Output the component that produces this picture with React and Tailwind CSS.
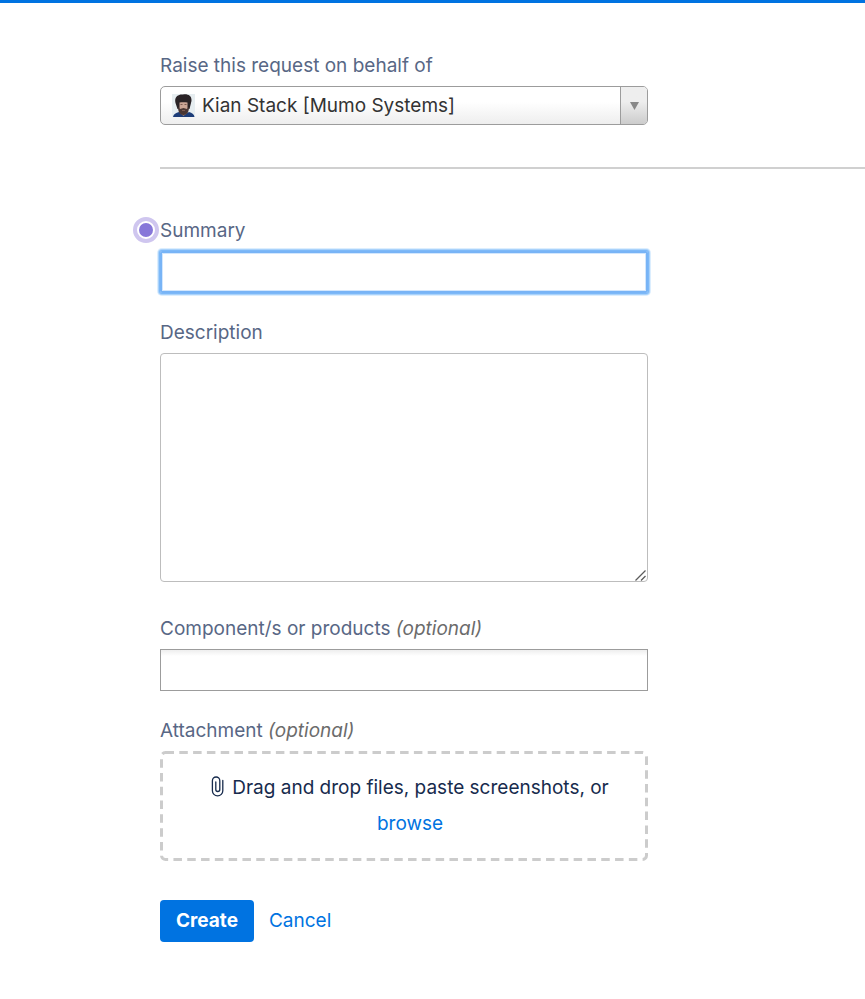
import { useState } from 'react';

export default function App() {
  const [summary, setSummary] = useState('');
  const [description, setDescription] = useState('');
  const [components, setComponents] = useState('');

  return (
    <div className="min-h-screen overflow-hidden border-t-3 border-[#0073e1] bg-white pb-14 pl-40 font-['Inter','Liberation_Sans',sans-serif] text-[19px] leading-6">
      <form onSubmit={(e) => e.preventDefault()}>
        <div className="border-b-2 border-[#d0d0d0] pt-[51px] pb-[42px]">
          <Field id="behalf" label="Raise this request on behalf of">
            <UserSelect id="behalf" />
          </Field>
        </div>

        <div className="flex flex-col gap-7 pt-[50px]">
          <Field id="summary" label="Summary" marker>
            <input
              id="summary"
              type="text"
              value={summary}
              onChange={(e) => setSummary(e.target.value)}
              className="block h-[42px] w-full rounded-xs border-2 border-[#78b4f6] px-2 shadow-[0_0_0_1px_#7db9f8,0_0_0_2px_#a9d2fb,0_0_0_3px_#dceefe,inset_0_0_0_1px_#d3e7fd] outline-none"
            />
          </Field>

          <Field id="description" label="Description">
            <div className="relative pb-[7px]">
              <textarea
                id="description"
                value={description}
                onChange={(e) => setDescription(e.target.value)}
                className="block h-[229px] w-full resize-none rounded-sm border border-[#bdbdbd] p-2 outline-none"
              />
              <svg
                className="pointer-events-none absolute right-0.5 bottom-2"
                width="11"
                height="11"
                viewBox="0 0 11 11"
                fill="none"
                stroke="#5c5c5c"
                strokeWidth="1.3"
              >
                <path d="M.5 10.5l10-10M6 10.5l4.5-4.500" />
              </svg>
            </div>
          </Field>

          <Field id="components" label="Component/s or products" optional>
            <input
              id="components"
              type="text"
              value={components}
              onChange={(e) => setComponents(e.target.value)}
              className="block h-[42px] w-full border border-[#9c9c9c] bg-linear-to-b from-[#eeeeee] to-white to-15% px-2 outline-none"
            />
          </Field>

          <Field id="attachment" label="Attachment" optional>
            <DropZone id="attachment" />
          </Field>
        </div>

        <div className="flex items-center gap-[15px] pt-[39px]">
          <button
            type="submit"
            className="h-[42px] rounded-sm bg-[#0073e1] px-4 font-bold text-white"
          >
            Create
          </button>
          <a href="#cancel" className="text-[#0073e1]">
            Cancel
          </a>
        </div>
      </form>
    </div>
  );
}

function Field({ id, label, optional, marker, children }) {
  return (
    <div className="flex w-full max-w-[488px] flex-col gap-2">
      <label htmlFor={id} className="relative text-[#586785]">
        {marker && (
          <span className="absolute top-[-2px] right-full mr-px flex size-[26px] items-center justify-center rounded-full border-4 border-[#cfc6ef] bg-white">
            <span className="size-[14px] rounded-full bg-[#8777d9]" />
          </span>
        )}
        {label}
        {optional && <em className="text-[#6b6b6b]"> (optional)</em>}
      </label>
      {children}
    </div>
  );
}

function UserSelect({ id }) {
  return (
    <div className="relative">
      <select
        id={id}
        className="block h-[39px] w-full appearance-none rounded-[5px] border border-[#9c9c9c] bg-linear-to-b from-white from-40% to-[#eeeeee] pr-8 pl-[41px] text-[#333333] outline-none"
      >
        <option>Kian Stack [Mumo Systems]</option>
      </select>
      <Avatar />
      <span className="pointer-events-none absolute inset-y-px right-px flex w-[27px] items-center justify-center rounded-r-sm border-l border-[#9c9c9c] bg-linear-to-t from-[#cccccc] to-[#eeeeee] to-60%">
        <svg width="9" height="8" viewBox="0 0 9 8" fill="#888888">
          <path d="M0 0h9L4.5 8z" />
        </svg>
      </span>
    </div>
  );
}

function Avatar() {
  return (
    <svg
      className="pointer-events-none absolute top-2 left-3"
      width="23"
      height="23"
      viewBox="0 0 23 23"
    >
      <path fill="#e6edf0" d="M0 0h23v23H0z" />
      <path fill="#1d3c78" d="M1 23c.5-3 3-4 6-5l5 3 5-3c3 1 5 2 5.5 5z" />
      <path fill="#a98273" d="M8 15h7v4l-3.5 3L8 19z" />
      <path fill="#2a2326" d="M3.500 9C2 3 6 0 11 .5 17-.5 21 3 19 9l-1.500 6h-12z" />
      <path fill="#cba595" d="M7.500 8.500c3-.5 5-.5 8 0V15c-1 3-7 3-8 0z" />
      <path fill="#4a3633" d="M6 13l2 2 3.500-1 3.500 1 2-2c0 5-2 8-5.500 8S6 18 6 13z" />
      <path fill="#7d5a50" d="M10 16h3v1h-3zM8.500 10h2v1h-2zM12.500 10h2v1h-2z" />
    </svg>
  );
}

function DropZone({ id }) {
  return (
    <div className="relative flex flex-col items-center gap-3 pt-[25px] pr-5 pb-[25px] pl-8 text-[#172b4d]">
      {/* Dashed outline */}
      <svg className="pointer-events-none absolute inset-0 size-full overflow-visible">
        <rect
          x="1.5"
          y="1.5"
          rx="4"
          className="h-[calc(100%-3px)] w-[calc(100%-3px)]"
          fill="none"
          stroke="#cccccc"
          strokeWidth="3"
          strokeDasharray="8.5 5.3"
        />
      </svg>
      <span className="flex items-center gap-2">
        <svg
          className="-mt-1"
          width="13"
          height="21"
          viewBox="0 0 13 21"
          fill="none"
          stroke="currentColor"
          strokeWidth="1.3"
          strokeLinecap="round"
        >
          <path d="M11.8 4.500v10.200a5.200 5.200 0 0 1-10.400 0V4.700a3.700 3.700 0 0 1 7.400 0V13.500a2 2 0 0 1-4 0V6" />
        </svg>
        Drag and drop files, paste screenshots, or
      </span>
      <label htmlFor={id} className="cursor-pointer text-[#0073e1]">
        browse
        <input id={id} type="file" multiple className="sr-only" />
      </label>
    </div>
  );
}
